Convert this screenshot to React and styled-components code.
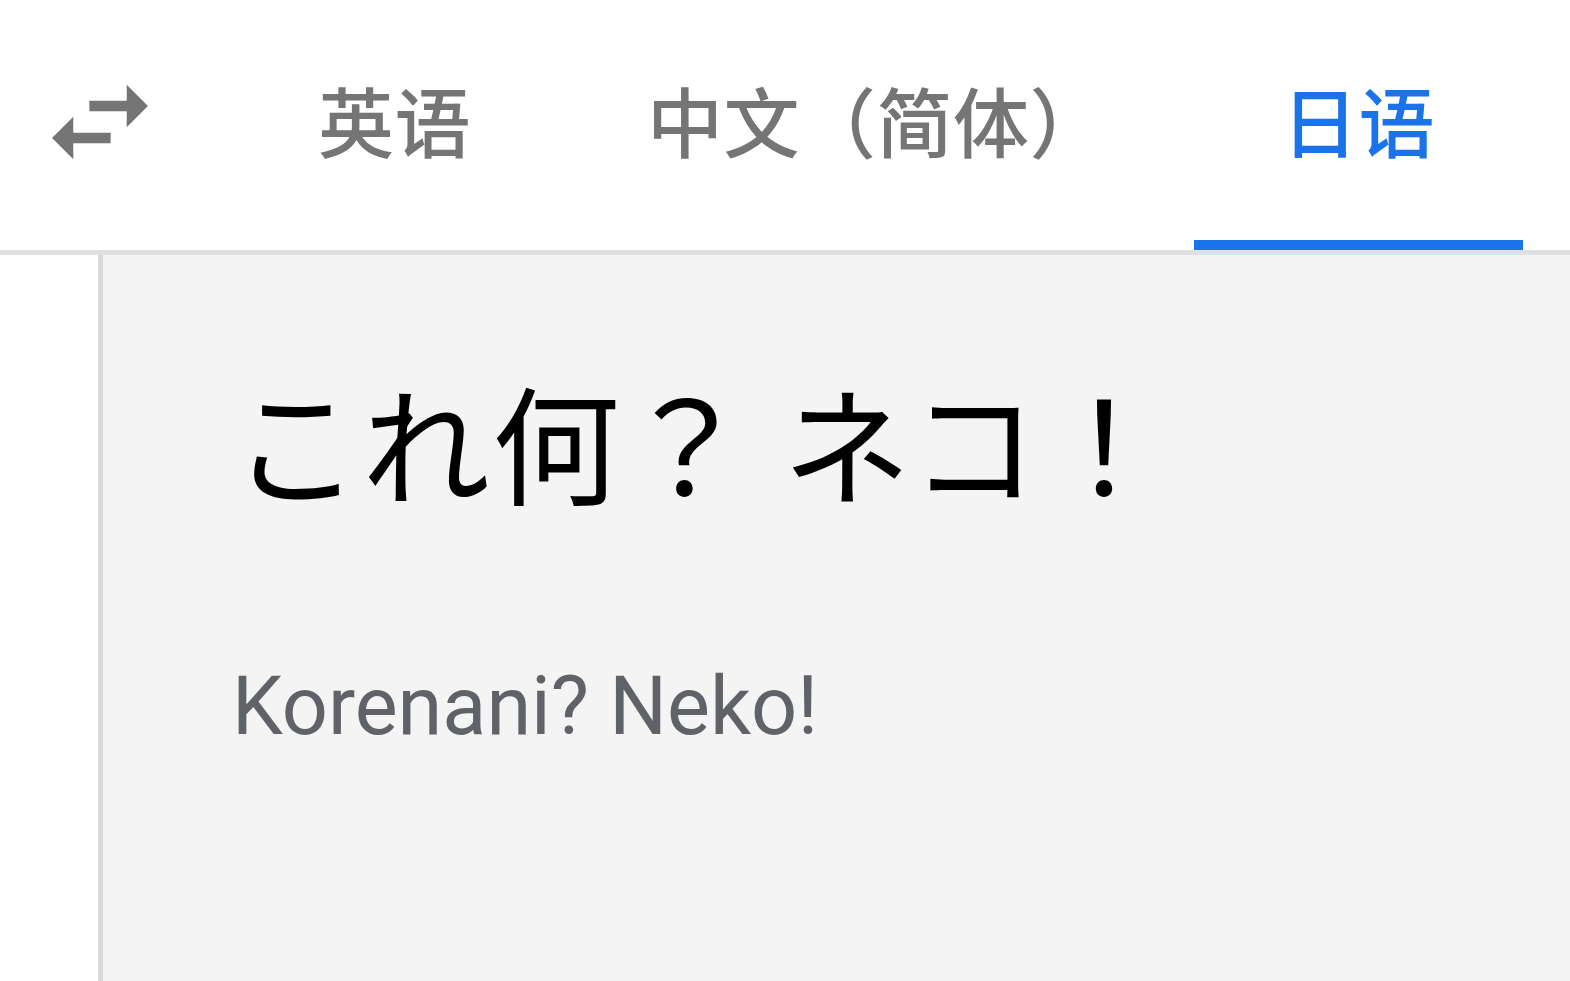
import React from "react";
import styled, { createGlobalStyle } from "styled-components";

const Global = createGlobalStyle`
  html, body { margin: 0; padding: 0; background: #ffffff; }
  body { font-family: "Noto Sans CJK SC", "Noto Sans", sans-serif; }
  #root { height: 981px; overflow: hidden; }
`;

const Page = styled.div`
  height: 981px;
  display: flex;
  flex-direction: column;
  background: #ffffff;
`;

const Header = styled.div`
  height: 250px;
  display: flex;
  align-items: stretch;
  border-bottom: 5px solid #e0e0e0;
  box-sizing: content-box;
`;

const SwapButton = styled.div`
  width: 128px;
  margin-left: 36px;
  margin-right: 66px;
  display: flex;
  align-items: flex-start;
  padding-top: 58px;
  color: #757575;
`;

const Tab = styled.div`
  position: relative;
  padding: 0 88px 12px;
  display: flex;
  align-items: center;
  font-family: "Noto Sans CJK SC", sans-serif;
  font-size: 76px;
  font-weight: 500;
  letter-spacing: 0.5px;
  line-height: 1;
  color: ${(p) => (p.$active ? "#1a73e8" : "#757575")};
  white-space: nowrap;
  &::after {
    content: "";
    display: ${(p) => (p.$active ? "block" : "none")};
    position: absolute;
    left: 0;
    right: 0;
    bottom: 0;
    height: 10px;
    background: #1a73e8;
  }
`;

const Body = styled.div`
  flex: 1;
  display: flex;
`;

const Gutter = styled.div`
  width: 98px;
  background: #ffffff;
  border-right: 5px solid #dadada;
`;

const Panel = styled.div`
  flex: 1;
  background: #f4f4f4;
  padding: 109px 0 0 129px;
`;

const Source = styled.div`
  font-family: "Noto Sans CJK JP", sans-serif;
  font-size: 128px;
  letter-spacing: 2px;
  line-height: 1.2;
  color: #000000;
  white-space: pre;
`;

const Romaji = styled.div`
  margin-top: 148px;
  font-family: Roboto, "Liberation Sans", sans-serif;
  font-size: 81px;
  line-height: 1;
  color: #5f6368;
  white-space: nowrap;
`;

const SwapIcon = () => (
  <svg width="128" height="128" viewBox="0 0 24 24" fill="currentColor">
    <path d="M6.99 11L3 15l3.99 4v-3H14v-2H6.99v-3zM21 9l-3.99-4v3H10v2h7.01v3L21 9z" />
  </svg>
);

export default function App() {
  return (
    <Page>
      <Global />
      <Header>
        <SwapButton>
          <SwapIcon />
        </SwapButton>
        <Tab>英语</Tab>
        <Tab>中文（简体）</Tab>
        <Tab $active>日语</Tab>
      </Header>
      <Body>
        <Gutter />
        <Panel>
          <Source>これ何？ ネコ！</Source>
          <Romaji>Korenani? Neko!</Romaji>
        </Panel>
      </Body>
    </Page>
  );
}
